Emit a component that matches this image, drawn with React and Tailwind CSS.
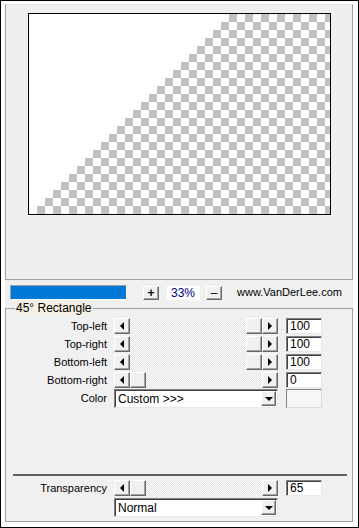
import React from "react";

const raised =
  "bg-[#f0f0f0] border border-t-white border-l-white border-r-[#696969] border-b-[#696969] shadow-[inset_-1px_-1px_#a0a0a0]";
const sunken =
  "bg-white border border-t-[#808080] border-l-[#808080] border-r-[#e8e8e8] border-b-[#e8e8e8] shadow-[inset_1px_1px_#404040]";

function LeftArrow() {
  return <div className="w-0 h-0 border-y-[4px] border-y-transparent border-r-[4px] border-r-black" />;
}
function RightArrow() {
  return <div className="w-0 h-0 border-y-[4px] border-y-transparent border-l-[4px] border-l-black" />;
}
function DownArrow() {
  return <div className="w-0 h-0 border-x-[4px] border-x-transparent border-t-[4px] border-t-black" />;
}

function Slider({ end }) {
  return (
    <div className="flex h-[16px] w-[164px]">
      <div className={`${raised} w-[16px] h-full flex items-center justify-center`}>
        <LeftArrow />
      </div>
      <div
        className={`flex-1 h-full flex ${end ? "justify-end" : "justify-start"} bg-[image:repeating-conic-gradient(#e4e4e4_0_25%,#fbfbfb_0_50%)] bg-[length:2px_2px]`}
      >
        <div className={`${raised} w-[16px] h-full`} />
      </div>
      <div className={`${raised} w-[16px] h-full flex items-center justify-center`}>
        <RightArrow />
      </div>
    </div>
  );
}

function Row({ label, end, value }) {
  return (
    <div className="flex items-center h-[16px]">
      <div className="w-[101px] text-right leading-none">{label}</div>
      <div className="ml-[7px]">
        <Slider end={end} />
      </div>
      <div className={`${sunken} ml-[8px] w-[36px] h-[16px] pl-[3px] flex items-center leading-none text-[12px]`}>
        {value}
      </div>
    </div>
  );
}

function Dropdown({ text }) {
  return (
    <div className={`${sunken} w-[164px] h-[19px] flex items-center`}>
      <div className="flex-1 pl-[3px] leading-none text-[12px]">{text}</div>
      <div className={`${raised} w-[15px] h-[15px] mr-[1px] flex items-center justify-center`}>
        <DownArrow />
      </div>
    </div>
  );
}

function Checker() {
  const rects = [];
  for (let r = 0; r < 25; r++) {
    for (let c = 25 - r; c < 38; c++) {
      if ((c + r) % 2 === 1) {
        rects.push(<rect key={`${r}-${c}`} x={c * 8} y={r * 8} width={8} height={8} fill="#c0c0c0" />);
      }
    }
  }
  return (
    <svg width="301" height="200" viewBox="0 0 301 200" className="block">
      <rect x="0" y="0" width="301" height="200" fill="#ffffff" />
      {rects}
    </svg>
  );
}

export default function App() {
  return (
    <div className="w-[359px] h-[528px] border border-black bg-white pt-[3px] pb-[5px] pl-[4px] pr-[5px] font-['Liberation_Sans',Arial,sans-serif] text-[11px] text-black">
      <div className="w-full h-full flex flex-col bg-[#f0f0f0]">
        {/* top preview panel */}
        <div className="h-[276px] border border-t-[#e4e4e4] border-l-[#a0a0a0] border-r-[#a0a0a0] border-b-[#a0a0a0] bg-[#efefef]">
          <div className="ml-[22px] mt-[8px] w-[303px] h-[202px] border border-black">
            <Checker />
          </div>
        </div>

        {/* zoom row */}
        <div className="h-[28px] flex items-start pt-[5px]">
          <div className="ml-[5px] w-[117px] h-[15px] border border-t-[#a0a0a0] border-l-[#a0a0a0] border-r-white border-b-white bg-[#0078d7]" />
          <div className={`${raised} ml-[16px] mt-[1px] w-[16px] h-[14px] flex items-center justify-center font-bold text-[12px] leading-none`}>
            +
          </div>
          <div className="ml-[8px] mt-[1px] w-[33px] h-[14px] bg-white text-[#000080] text-[12px] leading-none flex items-center pl-[4px]">
            33%
          </div>
          <div className={`${raised} ml-[6px] mt-[1px] w-[16px] h-[14px] flex items-center justify-center text-[12px] leading-none`}>
            –
          </div>
          <div className="ml-[15px] mt-[2px] leading-none">www.VanDerLee.com</div>
        </div>

        {/* group box */}
        <div className="relative flex-1 border border-[#a0a0a0] flex flex-col pt-[9px]">
          <span className="absolute -top-[7px] left-[9px] px-[1px] bg-[#f3efe3] leading-[13px] text-[12px]">
            45° Rectangle
          </span>
          <div className="flex flex-col gap-[2px]">
            <Row label="Top-left" end value="100" />
            <Row label="Top-right" end value="100" />
            <Row label="Bottom-left" end value="100" />
            <Row label="Bottom-right" value="0" />
          </div>
          <div className="flex items-center mt-[1px] h-[19px]">
            <div className="w-[101px] text-right leading-none">Color</div>
            <div className="ml-[7px]">
              <Dropdown text="Custom >>>" />
            </div>
            <div className="ml-[8px] w-[36px] h-[19px] bg-[#f7f7f7] border border-t-[#808080] border-l-[#808080] border-r-[#dcdcdc] border-b-[#dcdcdc]" />
          </div>

          <div className="mt-[66px] ml-[7px] w-[334px] h-[2px] bg-[#5f5f5f]" />

          <div className="mt-[4px]">
            <Row label="Transparency" value="65" />
          </div>
          <div className="mt-[2px] ml-[108px]">
            <Dropdown text="Normal" />
          </div>
        </div>
      </div>
    </div>
  );
}
